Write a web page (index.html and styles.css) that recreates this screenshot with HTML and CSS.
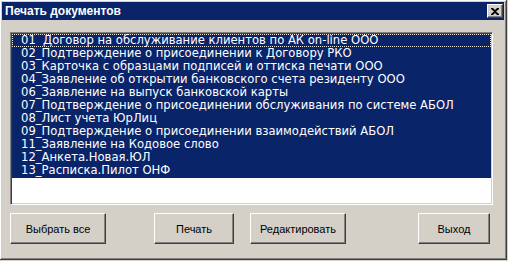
FILE: index.html
```html
<!DOCTYPE html>
<html lang="ru">
<head>
  <meta charset="UTF-8" />
  <title>Печать документов</title>
  <link rel="stylesheet" href="styles.css">
</head>
<body>

  <div class="window">
    <div class="titlebar">
      <span class="title">Печать документов</span>
      <button class="close" aria-label="Закрыть">
        <svg width="8" height="7" viewBox="0 0 8 7"><path d="M0 0h2l2 2 2-2h2v1l-3 2.5 3 2.5v1h-2l-2-2-2 2h-2v-1l3-2.5-3-2.5z" fill="#000"/></svg>
      </button>
    </div>

    <div class="listbox">
      <div class="item focus">01  Договор на обслуживание клиентов по АК on-line ООО</div>
      <div class="item">02_Подтверждение о присоединении к Договору РКО</div>
      <div class="item">03_Карточка с образцами подписей и оттиска печати ООО</div>
      <div class="item">04_Заявление об открытии банковского счета резиденту ООО</div>
      <div class="item">06_Заявление на выпуск банковской карты</div>
      <div class="item">07_Подтверждение о присоединении обслуживания по системе АБОЛ</div>
      <div class="item">08_Лист учета ЮрЛиц</div>
      <div class="item">09_Подтверждение о присоединении взаимодействий АБОЛ</div>
      <div class="item">11_Заявление на Кодовое слово</div>
      <div class="item">12_Анкета.Новая.ЮЛ</div>
      <div class="item">13_Расписка.Пилот ОНФ</div>
    </div>

    <div class="buttons">
      <button class="btn btn-all">Выбрать все</button>
      <button class="btn btn-print">Печать</button>
      <button class="btn btn-edit">Редактировать</button>
      <button class="btn btn-exit">Выход</button>
    </div>
  </div>

</body>
</html>
```

FILE: styles.css
```css
:root {
  --face: #d4d0c8;
  --shadow: #808080;
  --dark: #404040;
  --navy: #0a246a;
}

body {
  margin: 0;
  width: 508px;
  height: 261px;
  overflow: hidden;
  background: var(--face);
  font-family: 'DejaVu Sans', sans-serif;
  font-size: 11px;
}

.window {
  box-sizing: border-box;
  width: 508px;
  height: 261px;
  padding: 3px;
  background: var(--face);
  border: 1px solid;
  border-color: var(--face) var(--dark) var(--dark) var(--face);
  box-shadow: inset 1px 1px 0 #fff, inset -1px -1px 0 var(--shadow);
  margin-top: -1px;
  margin-left: -1px;
}

.titlebar {
  display: flex;
  align-items: center;
  justify-content: space-between;
  height: 18px;
  margin: -1px -1px 0 -1px;
  padding: 0 1px 0 3px;
  background: var(--navy);
  color: #fff;
}

.title {
  font-family: 'Liberation Sans', sans-serif;
  font-size: 12px;
  font-weight: bold;
}

.close {
  display: flex;
  align-items: center;
  justify-content: center;
  width: 16px;
  height: 14px;
  padding: 0;
  background: var(--face);
  border: 1px solid;
  border-color: #fff var(--dark) var(--dark) #fff;
  box-shadow: inset -1px -1px 0 var(--shadow);
}

.listbox {
  box-sizing: border-box;
  width: 483px;
  height: 173px;
  margin: 12px 0 0 7px;
  background: #fff;
  border: 1px solid;
  border-color: var(--shadow) #fff #fff var(--shadow);
  box-shadow: inset 1px 1px 0 var(--dark), inset -1px -1px 0 var(--face);
  padding: 1px;
}

.item {
  box-sizing: border-box;
  height: 13px;
  line-height: 13px;
  padding-left: 9px;
  background: var(--navy);
  color: #fff;
  font-size: 11.6px;
  white-space: pre;
}

.item.focus {
  border: 1px dotted #e8e4dc;
  line-height: 11px;
  padding-left: 8px;
}

.item:last-child {
  height: 14px;
}

.buttons {
  display: flex;
  margin-top: 8px;
  padding-left: 7px;
}

.btn {
  box-sizing: border-box;
  height: 31px;
  padding: 0;
  font-family: 'Liberation Sans', sans-serif;
  font-size: 11px;
  color: #000;
  background: var(--face);
  border: 1px solid;
  border-color: #fff var(--dark) var(--dark) #fff;
  box-shadow: inset -1px -1px 0 var(--shadow);
}

.btn-all { width: 96px; }
.btn-print { width: 80px; margin-left: 48px; }
.btn-edit { width: 96px; margin-left: 16px; }
.btn-exit { width: 72px; margin-left: 72px; }
```
